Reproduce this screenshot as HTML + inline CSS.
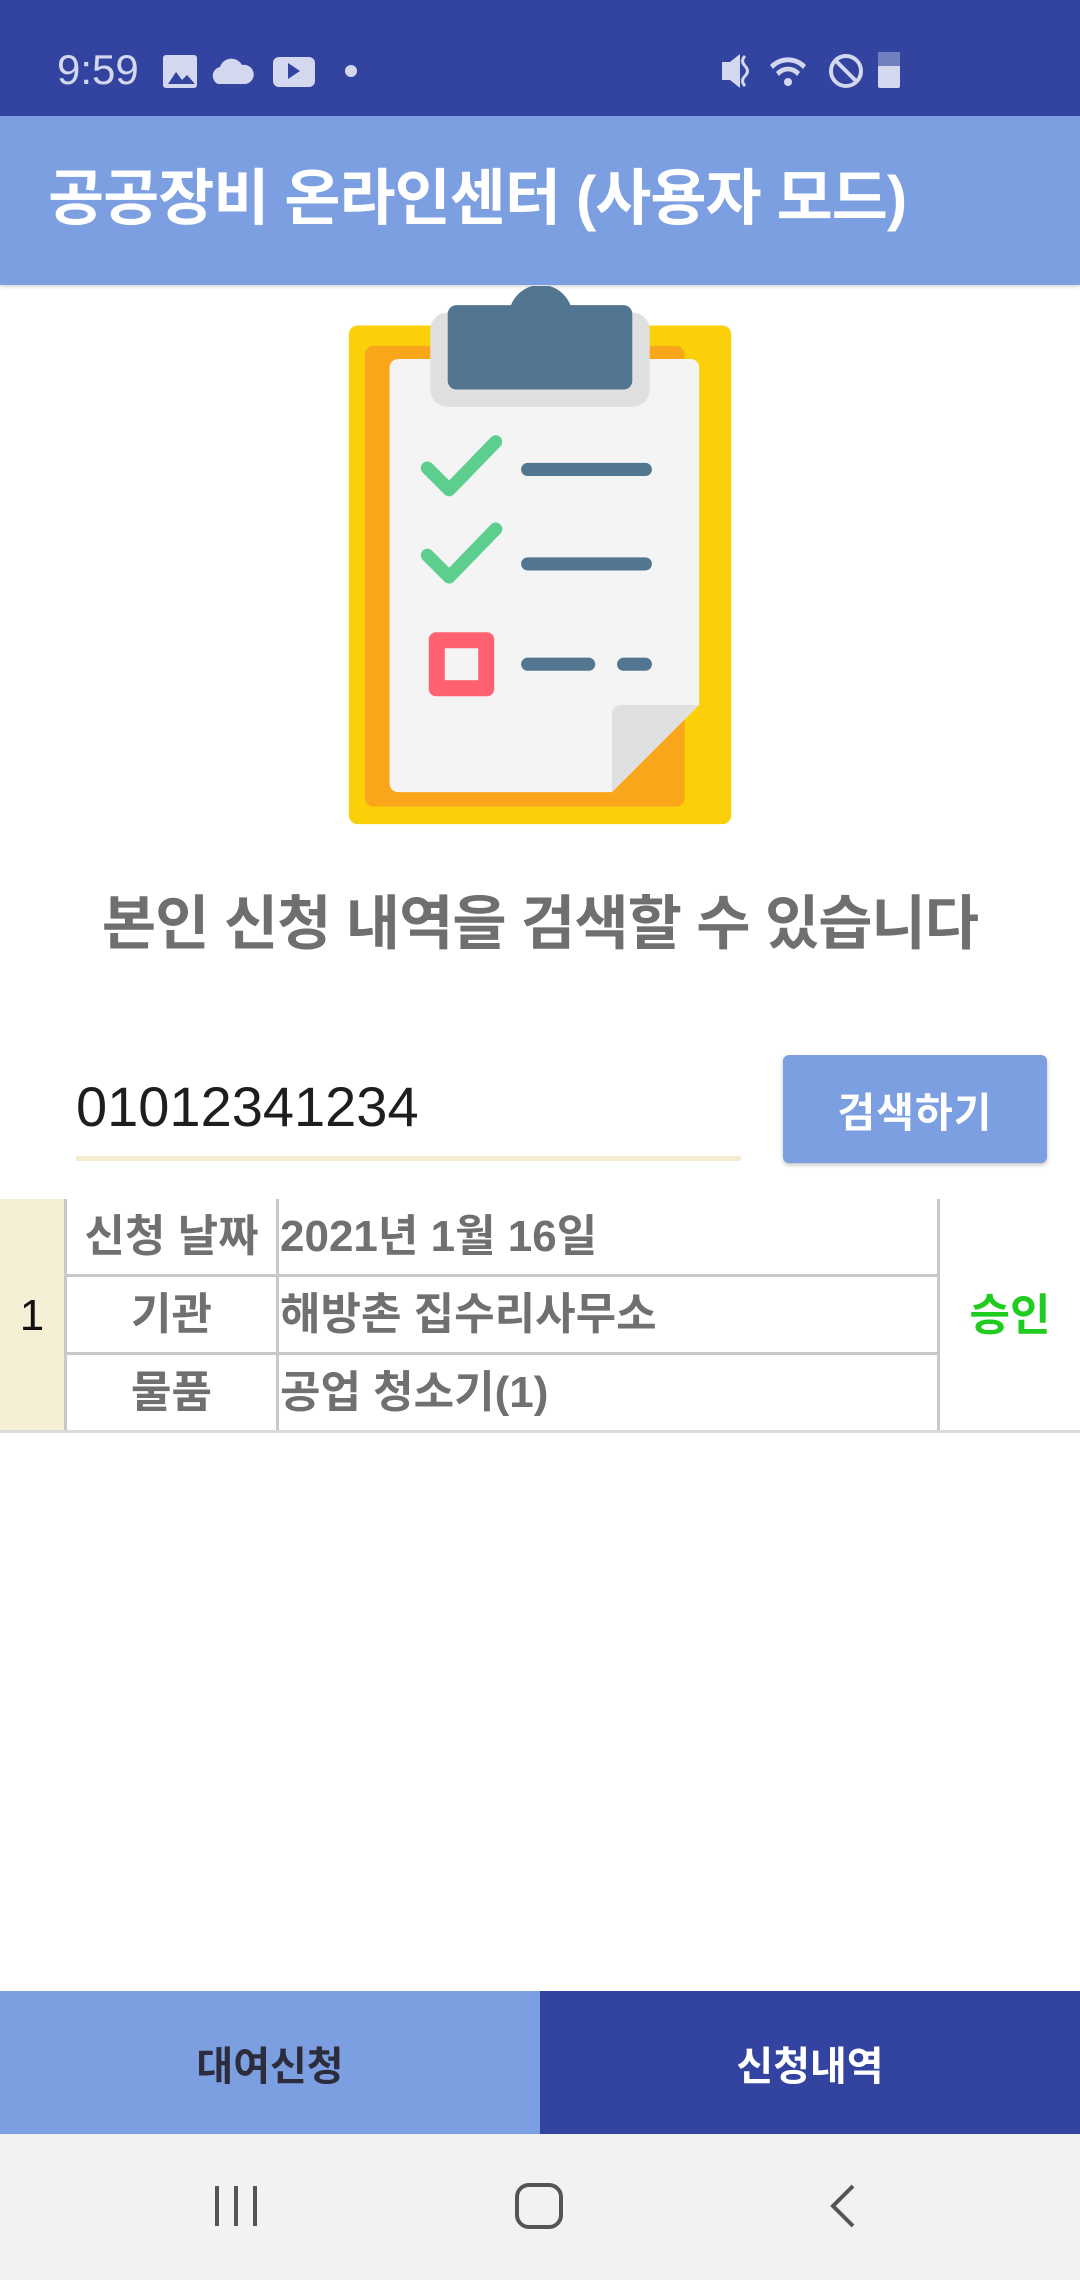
<!DOCTYPE html>
<html><head><meta charset="utf-8"><style>
*{margin:0;padding:0;box-sizing:border-box}
body{width:1080px;height:2280px;position:relative;background:#fff;font-family:"Liberation Sans","Noto Sans CJK KR",sans-serif;overflow:hidden}
.abs{position:absolute}
.cell{position:absolute;color:#707070;font-size:44px;font-weight:bold;line-height:1;display:flex;align-items:center}
</style></head><body>
<div class="abs" style="left:0;top:0;width:1080px;height:116px;background:#3244a0"></div>
<div class="abs" style="left:57px;top:46px;color:#d4d8ee;font-size:42px;">9:59</div>
<svg class="abs" style="left:0;top:0" width="1080" height="116" viewBox="0 0 1080 116">
<g fill="#d4d8ee">
<rect x="163" y="55" width="34" height="33" rx="3"/>
<path d="M218 84 a9 9 0 0 1 2-17 a12 12 0 0 1 22-2 a9 9 0 0 1 4 19z"/>
<rect x="273" y="57" width="42" height="30" rx="6"/>
<circle cx="351" cy="71" r="6"/>
<path d="M722 62h8l10-8v34l-10-8h-8z"/>
<circle cx="846" cy="71" r="15" fill="none" stroke="#d4d8ee" stroke-width="4"/>
<path d="M835 60l22 22" stroke="#d4d8ee" stroke-width="4"/>
<rect x="878" y="64" width="22" height="24" rx="2"/>
<path d="M770 65a25 25 0 0 1 36 0l-3 4a20 20 0 0 0-30 0z M776 72a16 16 0 0 1 24 0l-3 4a11 11 0 0 0-18 0z"/>
<circle cx="788" cy="82" r="4"/>
</g>
<rect x="878" y="52" width="22" height="14" fill="#6f7fc0"/>
<path d="M168 84l8-12 6 8 5-5 8 9z" fill="#3244a0"/>
<path d="M288 63v16l12-8z" fill="#3244a0"/>
<path d="M745 56q-5 5 0 10q5 5 0 10q-5 5 0 10" fill="none" stroke="#d4d8ee" stroke-width="3"/>
</svg>
<div class="abs" style="left:0;top:116px;width:1080px;height:169px;background:#7b9fe0;box-shadow:0 2px 3px rgba(0,0,0,.15)"></div>
<div class="abs" style="left:48px;top:160px;color:#fff;font-size:61px;font-weight:bold;line-height:76px;letter-spacing:-1px">공공장비 온라인센터 (사용자 모드)</div>

<svg class="abs" style="left:0;top:286px" width="1080" height="540" viewBox="0 196.8 743 371.5">
<rect x="240" y="224" width="263" height="343" rx="6" fill="#fcd008"/>
<rect x="251" y="238" width="220" height="317" rx="6" fill="#f9a61a"/>
<path d="M268 247h207a6 6 0 0 1 6 6v232l-60 60h-147a6 6 0 0 1-6-6v-286a6 6 0 0 1 6-6z" fill="#f4f4f4"/>
<path d="M481 485h-54a6 6 0 0 0-6 6v54z" fill="#e0e0e0"/>
<rect x="296" y="215" width="151" height="65" rx="12" fill="#e0e0e0"/>
<circle cx="372" cy="218" r="22" fill="#537690"/>
<rect x="308" y="210" width="127" height="58" rx="6" fill="#537690"/>
<path d="M294 322l15 15l32-33 M294 382l15 15l32-33" fill="none" stroke="#5ccf8f" stroke-width="9" stroke-linecap="round" stroke-linejoin="round"/>
<path d="M363 323h81 M363 388h81 M363 457h42 M429 457h15" stroke="#537690" stroke-width="9" stroke-linecap="round"/>
<rect x="295" y="435" width="45" height="44" rx="5" fill="#ff6170"/>
<rect x="306" y="446" width="23" height="22" fill="#f4f4f4"/>
</svg>

<div class="abs" style="left:0;top:886px;width:1080px;text-align:center;color:#6f6f6f;font-size:59px;font-weight:bold;line-height:76px;letter-spacing:-1px">본인 신청 내역을 검색할 수 있습니다</div>

<div class="abs" style="left:76px;top:1075px;color:#1e1e1e;font-size:56px;line-height:64px">01012341234</div>
<div class="abs" style="left:76px;top:1156px;width:665px;height:5px;background:#f5ecd0"></div>
<div class="abs" style="left:783px;top:1055px;width:264px;height:108px;background:#7b9fe0;border-radius:6px;box-shadow:0 2px 4px rgba(0,0,0,.25);color:#fff;font-size:41px;font-weight:bold;display:flex;align-items:center;justify-content:center;letter-spacing:1px">검색하기</div>

<div class="abs" style="left:0;top:1199px;width:64px;height:233px;background:#f5efd6"></div>
<div class="cell" style="left:0;top:1199px;width:64px;height:233px;justify-content:center;color:#111;font-weight:normal">1</div>
<div class="abs" style="left:64px;top:1199px;width:3px;height:233px;background:#c8c8c8"></div>
<div class="abs" style="left:276px;top:1199px;width:3px;height:233px;background:#c8c8c8"></div>
<div class="abs" style="left:937px;top:1199px;width:3px;height:233px;background:#c8c8c8"></div>
<div class="abs" style="left:64px;top:1274px;width:876px;height:3px;background:#c8c8c8"></div>
<div class="abs" style="left:64px;top:1352px;width:876px;height:3px;background:#c8c8c8"></div>
<div class="abs" style="left:0;top:1430px;width:1080px;height:3px;background:#dadada"></div>
<div class="cell" style="left:67px;top:1199px;width:209px;height:75px;justify-content:center">신청 날짜</div>
<div class="cell" style="left:67px;top:1277px;width:209px;height:75px;justify-content:center">기관</div>
<div class="cell" style="left:67px;top:1355px;width:209px;height:75px;justify-content:center">물품</div>
<div class="cell" style="left:280px;top:1199px;height:75px">2021년 1월 16일</div>
<div class="cell" style="left:280px;top:1277px;height:75px">해방촌 집수리사무소</div>
<div class="cell" style="left:280px;top:1355px;height:75px">공업 청소기(1)</div>
<div class="cell" style="left:940px;top:1199px;width:140px;height:233px;justify-content:center;color:#1fcc1f">승인</div>

<div class="abs" style="left:0;top:1991px;width:540px;height:143px;background:#7b9fe0;color:#2c2c3c;font-size:40px;font-weight:bold;display:flex;align-items:center;justify-content:center">대여신청</div>
<div class="abs" style="left:540px;top:1991px;width:540px;height:143px;background:#3244a0;color:#fff;font-size:40px;font-weight:bold;display:flex;align-items:center;justify-content:center">신청내역</div>
<div class="abs" style="left:0;top:2134px;width:1080px;height:146px;background:#f2f2f2"></div>
<svg class="abs" style="left:0;top:2134px" width="1080" height="146">
<path d="M217 52v40 M236 52v40 M255 52v40" stroke="#555" stroke-width="4"/>
<rect x="517" y="51" width="44" height="42" rx="12" fill="none" stroke="#555" stroke-width="4"/>
<path d="M853 52l-20 20 20 20" fill="none" stroke="#555" stroke-width="4"/>
</svg>
</body></html>
